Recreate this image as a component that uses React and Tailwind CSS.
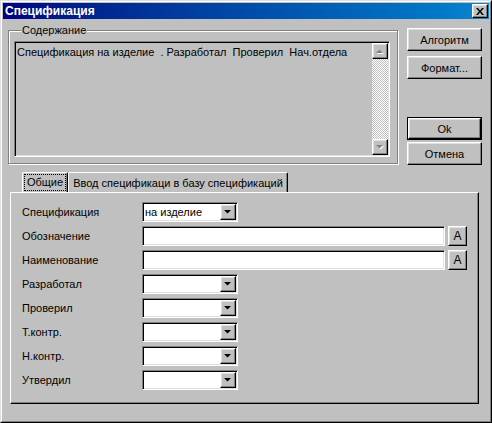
import React from 'react';

const raised =
  'border border-t-white border-l-white border-r-black border-b-black shadow-[inset_-1px_-1px_0_#808080,inset_1px_1px_0_#dfdfdf] bg-[#c0c0c0]';
const sunken =
  'border border-t-[#808080] border-l-[#808080] border-r-white border-b-white shadow-[inset_1px_1px_0_#000,inset_-1px_-1px_0_#dfdfdf] p-px';

function Arrow({ up = false, disabled = false }) {
  // small 7x4 triangle like the classic scroll/combobox glyph
  const pts = up ? '0,4 7,4 3.5,0.5' : '0,0 7,0 3.5,3.5';
  return (
    <svg width="8" height="5" viewBox="0 0 8 5">
      {disabled && (
        <polygon points={pts} fill="#ffffff" transform="translate(1,1)" />
      )}
      <polygon points={pts} fill={disabled ? '#808080' : '#000000'} />
    </svg>
  );
}

function Button({ children, isDefault = false }) {
  if (isDefault) {
    return (
      <div className="w-[75px] h-[23px] border border-black">
        <div className={`w-full h-full ${raised} flex items-center justify-center`}>
          {children}
        </div>
      </div>
    );
  }
  return (
    <div className={`w-[75px] h-[23px] ${raised} flex items-center justify-center`}>
      {children}
    </div>
  );
}

function Combo({ value = '' }) {
  return (
    <div className={`w-[96px] h-[20px] bg-white ${sunken} flex`}>
      <div className="flex-1 pl-[1px] leading-[16px] whitespace-nowrap overflow-hidden">{value}</div>
      <div className={`w-[16px] h-[16px] ${raised} flex items-center justify-center`}>
        <Arrow />
      </div>
    </div>
  );
}

function TextInput() {
  return (
    <div className="flex items-center">
      <div className={`w-[303px] h-[20px] bg-white ${sunken}`} />
      <div className={`ml-[3px] w-[19px] h-[20px] ${raised} flex items-center justify-center text-[12px]`}>
        A
      </div>
    </div>
  );
}

function Row({ label, children }) {
  return (
    <div className="flex items-center h-[20px]">
      <div className="w-[120px] whitespace-nowrap">{label}</div>
      {children}
    </div>
  );
}

function Tab({ children, width }) {
  return (
    <div
      className={`${width} h-[20px] border-t border-l border-t-white border-l-white border-r border-r-black rounded-tl-[2px] rounded-tr-[2px] shadow-[inset_-1px_0_0_#808080] flex items-center justify-center whitespace-nowrap`}
    >
      {children}
    </div>
  );
}

export default function App() {
  return (
    <div className="w-[492px] h-[423px] bg-[#c0c0c0] text-black text-[11px] leading-[14px] font-['Liberation_Sans',Arial,sans-serif] border border-t-[#dfdfdf] border-l-[#dfdfdf] border-r-black border-b-black overflow-hidden">
      <div className="h-full border border-t-white border-l-white border-r-[#808080] border-b-[#808080] p-px flex flex-col">
        {/* Title bar */}
        <div className="h-[16px] flex items-center justify-between bg-gradient-to-r from-[#000080] to-[#1084d0] pl-[2px] pr-[1px]">
          <span className="text-white font-bold text-[12px]">Спецификация</span>
          <div className={`w-[16px] h-[14px] ${raised} flex items-center justify-center`}>
            <svg width="8" height="7" viewBox="0 0 8 7">
              <path d="M0 0h2l2 2.5L6 0h2L5 3.5 8 7H6L4 4.5 2 7H0l3-3.5z" fill="#000" />
            </svg>
          </div>
        </div>

        {/* Body */}
        <div className="flex-1 flex flex-col">
          <div className="flex items-start ml-[5px]">
            <fieldset className="mt-[4px] w-[390px] border border-[#808080] shadow-[inset_1px_1px_0_#fff,1px_1px_0_#fff] pl-[5px] pr-[6px] pb-[6px]">
              <legend className="ml-[7px] px-[1px] bg-[#c0c0c0] leading-[14px]">Содержание</legend>
              <div className={`mt-[4px] w-[376px] h-[116px] bg-[#c0c0c0] ${sunken} flex`}>
                <div className="flex-1 pl-[1px] pt-[2px] whitespace-pre overflow-hidden">
                  Спецификация на изделие  . Разработал  Проверил  Нач.отдела
                </div>
                <div className="w-[16px] flex flex-col">
                  <div className={`h-[16px] ${raised} flex items-center justify-center`}>
                    <Arrow up disabled />
                  </div>
                  <div className="flex-1 bg-[repeating-conic-gradient(#c0c0c0_0%_25%,#ffffff_0%_50%)] bg-[length:2px_2px]" />
                  <div className={`h-[16px] ${raised} flex items-center justify-center`}>
                    <Arrow disabled />
                  </div>
                </div>
              </div>
            </fieldset>

            <div className="ml-[9px] mt-[9px] flex flex-col">
              <Button>Алгоритм</Button>
              <div className="mt-[5px]">
                <Button>Формат...</Button>
              </div>
              <div className="mt-[38px]">
                <Button isDefault>Ok</Button>
              </div>
              <div className="mt-[2px]">
                <Button>Отмена</Button>
              </div>
            </div>
          </div>

          {/* Tabs */}
          <div className="mt-[7px] ml-[19px] flex h-[20px]">
            <Tab width="w-[46px]">
              <span className="outline outline-1 outline-dotted outline-black px-[2px] leading-[15px]">Общие</span>
            </Tab>
            <Tab width="w-[220px]">Ввод спецификаци в базу спецификаций</Tab>
          </div>

          {/* Tab panel */}
          <div className="ml-[7px] w-[469px] h-[212px] border border-t-white border-l-white border-r-black border-b-black shadow-[inset_-1px_-1px_0_#808080] pt-[9px] pl-[11px] flex flex-col gap-[4px]">
            <Row label="Спецификация">
              <Combo value="на изделие" />
            </Row>
            <Row label="Обозначение">
              <TextInput />
            </Row>
            <Row label="Наименование">
              <TextInput />
            </Row>
            <Row label="Разработал">
              <Combo />
            </Row>
            <Row label="Проверил">
              <Combo />
            </Row>
            <Row label="Т.контр.">
              <Combo />
            </Row>
            <Row label="Н.контр.">
              <Combo />
            </Row>
            <Row label="Утвердил">
              <Combo />
            </Row>
          </div>
        </div>
      </div>
    </div>
  );
}
